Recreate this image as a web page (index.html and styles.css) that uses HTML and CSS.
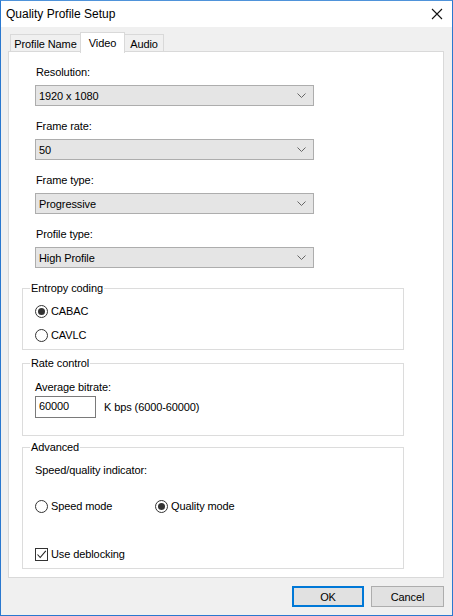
FILE: index.html
```html
<!DOCTYPE html>
<html>
<head>
<meta charset="utf-8">
<link rel="stylesheet" href="styles.css">
</head>
<body>
<div class="window">
  <div class="titlebar">
    <span class="title">Quality Profile Setup</span>
    <svg class="close" width="12" height="12" viewBox="0 0 12 12"><path d="M1 1 L11 11 M11 1 L1 11" stroke="#111" stroke-width="1.1" fill="none"/></svg>
  </div>
  <div class="client">
    <div class="tabs">
      <div class="tab tab-profile">Profile Name</div>
      <div class="tab tab-video active">Video</div>
      <div class="tab tab-audio">Audio</div>
    </div>
    <div class="panel">
      <div class="field">
        <div class="label">Resolution:</div>
        <div class="combo"><span>1920 x 1080</span><svg class="chev" width="9" height="5" viewBox="0 0 9 5"><path d="M0.5 0.5 L4.5 4.5 L8.5 0.5" stroke="#666" fill="none"/></svg></div>
      </div>
      <div class="field">
        <div class="label">Frame rate:</div>
        <div class="combo"><span>50</span><svg class="chev" width="9" height="5" viewBox="0 0 9 5"><path d="M0.5 0.5 L4.5 4.5 L8.5 0.5" stroke="#666" fill="none"/></svg></div>
      </div>
      <div class="field">
        <div class="label">Frame type:</div>
        <div class="combo"><span>Progressive</span><svg class="chev" width="9" height="5" viewBox="0 0 9 5"><path d="M0.5 0.5 L4.5 4.5 L8.5 0.5" stroke="#666" fill="none"/></svg></div>
      </div>
      <div class="field">
        <div class="label">Profile type:</div>
        <div class="combo"><span>High Profile</span><svg class="chev" width="9" height="5" viewBox="0 0 9 5"><path d="M0.5 0.5 L4.5 4.5 L8.5 0.5" stroke="#666" fill="none"/></svg></div>
      </div>

      <fieldset class="group group-entropy">
        <legend>Entropy coding</legend>
        <div class="opt"><span class="radio checked"></span><span>CABAC</span></div>
        <div class="opt"><span class="radio"></span><span>CAVLC</span></div>
      </fieldset>

      <fieldset class="group group-rate">
        <legend>Rate control</legend>
        <div class="label">Average bitrate:</div>
        <div class="rate-row">
          <div class="input">60000</div>
          <span>K bps (6000-60000)</span>
        </div>
      </fieldset>

      <fieldset class="group group-adv">
        <legend>Advanced</legend>
        <div class="label">Speed/quality indicator:</div>
        <div class="mode-row">
          <div class="opt opt-speed"><span class="radio"></span><span>Speed mode</span></div>
          <div class="opt"><span class="radio checked"></span><span>Quality mode</span></div>
        </div>
        <div class="opt opt-deblock"><span class="check"><svg width="11" height="11" viewBox="0 0 11 11"><path d="M1.5 5.5 L4.2 8.5 L9.8 1.8" stroke="#222" stroke-width="1.1" fill="none"/></svg></span><span>Use deblocking</span></div>
      </fieldset>
    </div>
    <div class="buttons">
      <div class="btn btn-default">OK</div>
      <div class="btn">Cancel</div>
    </div>
  </div>
</div>
</body>
</html>
```

FILE: styles.css
```css
html, body {
  margin: 0;
  padding: 0;
}
body {
  font-family: "Liberation Sans", Arial, sans-serif;
  font-size: 11px;
  letter-spacing: -0.1px;
  color: #000;
  background: #f0f0f0;
}
.window {
  width: 453px;
  height: 616px;
  box-sizing: border-box;
  border: 1px solid #2a78cf;
  border-top-color: #4f93da;
  display: flex;
  flex-direction: column;
  background: #f0f0f0;
}
.titlebar {
  height: 26px;
  background: #fff;
  display: flex;
  align-items: center;
  justify-content: space-between;
  padding: 0 9px 0 5px;
}
.title {
  font-size: 12px;
  line-height: 16px;
  letter-spacing: 0;
}
.close {
  display: block;
}
.client {
  flex: 1;
  display: flex;
  flex-direction: column;
  padding: 5px 8px 8px 7px;
}
.tabs {
  display: flex;
  align-items: flex-end;
  height: 20px;
  padding-left: 2px;
  position: relative;
  z-index: 1;
}
.tab {
  box-sizing: border-box;
  height: 18px;
  border: 1px solid #d9d9d9;
  background: #f0f0f0;
  display: flex;
  align-items: center;
  justify-content: center;
  line-height: 15px;
  padding-top: 2px;
}
.tab-profile { width: 70px; border-right: none; }
.tab-video { width: 45px; }
.tab-audio { width: 39px; border-left: none; }
.tab.active {
  height: 21px;
  background: #fff;
  border-bottom: none;
  padding-top: 0;
  margin-bottom: -1px;
}
.panel {
  flex: 1;
  margin-top: -1px;
  background: #fff;
  border: 1px solid #d9d9d9;
  padding: 13px 0 0 13px;
}
.field {
  margin-left: 13px;
  margin-bottom: 13px;
  width: 279px;
}
.label {
  line-height: 15px;
  padding-left: 1px;
  margin-bottom: 5px;
}
.combo {
  box-sizing: border-box;
  height: 21px;
  background: #e5e5e5;
  border: 1px solid #adadad;
  display: flex;
  align-items: center;
  justify-content: space-between;
  padding: 0 7px 0 3px;
}
.chev {
  display: block;
}
.group {
  margin: 0;
  width: 382px;
  box-sizing: border-box;
  border: 1px solid #dcdcdc;
  padding: 5px 12px 4px 12px;
}
.group legend {
  line-height: 15px;
  padding: 0 1px;
  margin-left: -5px;
}
.group-entropy {
  margin-top: 11px;
  display: flex;
  flex-direction: column;
  gap: 4px;
}
.opt {
  display: flex;
  align-items: center;
  height: 20px;
  gap: 3px;
}
.radio {
  width: 13px;
  height: 13px;
  box-sizing: border-box;
  border: 1px solid #333;
  border-radius: 50%;
  display: flex;
  align-items: center;
  justify-content: center;
  background: #fff;
}
.radio.checked::after {
  content: "";
  width: 7px;
  height: 7px;
  border-radius: 50%;
  background: #333;
}
.check {
  width: 13px;
  height: 13px;
  box-sizing: border-box;
  border: 1px solid #333;
  display: flex;
  align-items: center;
  justify-content: center;
  background: #fff;
}
.check svg { display: block; }
.group-rate {
  margin-top: 6px;
  padding-top: 9px;
  padding-bottom: 17px;
}
.group-rate .label {
  padding-left: 0;
  margin-bottom: 1px;
}
.rate-row {
  display: flex;
  align-items: center;
  gap: 8px;
}
.input {
  box-sizing: border-box;
  width: 61px;
  height: 22px;
  border: 1px solid #7a7a7a;
  padding: 0 3px;
  line-height: 18px;
}
.group-adv {
  margin-top: 4px;
  padding-top: 8px;
  padding-bottom: 4px;
}
.group-adv .label {
  padding-left: 0;
  margin-bottom: 0;
}
.mode-row {
  display: flex;
  margin-top: 18px;
}
.opt-speed {
  width: 120px;
}
.opt-deblock {
  margin-top: 28px;
}
.buttons {
  display: flex;
  justify-content: flex-end;
  gap: 7px;
  margin-top: 8px;
}
.btn {
  box-sizing: border-box;
  width: 73px;
  height: 21px;
  background: #e1e1e1;
  border: 1px solid #adadad;
  display: flex;
  align-items: center;
  justify-content: center;
}
.btn-default {
  border: 2px solid #0078d7;
  width: 72px;
}
```
